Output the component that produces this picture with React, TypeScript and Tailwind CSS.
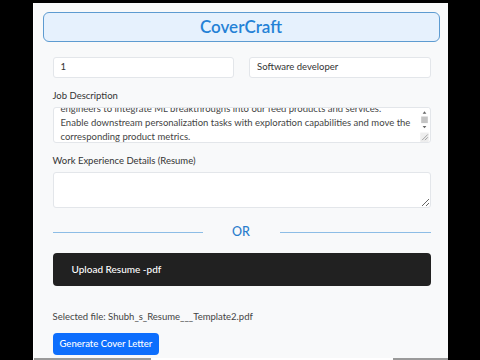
import React from "react";

const font = { fontFamily: "Lato, 'Noto Sans', sans-serif" };

export default function App() {
  return (
    <div className="w-[480px] h-[360px] bg-black flex justify-center pt-[3px] overflow-hidden" style={font}>
      <div className="w-[415px] h-[357px] bg-[#f8f9fa] flex flex-col border-l border-white">
        <div className="mt-[9px] ml-[9px] w-[397px] h-[30px] rounded-[6px] border border-[#5d9bd1] bg-[#e6f1fd] flex items-center justify-center">
          <span className="text-[17px] font-semibold text-[#2481d6]">CoverCraft</span>
        </div>

        <div className="flex flex-col ml-[19px] w-[378px] text-[9.5px] text-[#333]">
          <div className="grid grid-cols-2 gap-[15px] mt-[15px]">
            <div className="h-[21px] bg-white border border-[#e3e6ea] rounded-[3px] flex items-center px-[7px] text-[9.5px]">1</div>
            <div className="h-[21px] bg-white border border-[#e3e6ea] rounded-[3px] flex items-center px-[7px] text-[9.5px]">Software developer</div>
          </div>

          <div className="mt-[11px] leading-[14px] text-[9.5px]">Job Description</div>
          <div className="relative mt-[4px] h-[36px] bg-white border border-[#e3e6ea] rounded-[3px] overflow-hidden">
            <div className="pl-[7px] pr-[16px] leading-[14px] text-[9.5px] text-[#444] -mt-[6px] whitespace-nowrap">
              <div>engineers to integrate ML breakthroughs into our feed products and services.</div>
              <div>Enable downstream personalization tasks with exploration capabilities and move the</div>
              <div>corresponding product metrics.</div>
            </div>
            <div className="absolute right-[1px] top-0 bottom-0 w-[9px] flex flex-col items-center bg-white">
              <svg width="9" height="36" viewBox="0 0 9 36">
                <polygon points="2.5,6 6.5,6 4.5,3.5" fill="#666" />
                <rect x="1" y="9" width="7" height="7" fill="#c4c4c4" />
                <polygon points="2.5,19 6.5,19 4.5,21.5" fill="#666" />
                <rect x="0" y="26" width="9" height="10" fill="#eee" />
                <line x1="2" y1="34" x2="8" y2="28" stroke="#888" strokeWidth="0.8" />
                <line x1="5" y1="34" x2="8" y2="31" stroke="#888" strokeWidth="0.8" />
              </svg>
            </div>
          </div>

          <div className="mt-[11px] leading-[14px] text-[9.5px]">Work Experience Details (Resume)</div>
          <textarea className="mt-[4px] h-[36px] bg-white border border-[#e3e6ea] rounded-[3px] outline-none" />

          <div className="mt-[17px] flex items-center h-[14px]">
            <div className="w-[150px] h-px bg-[#8dbde6]" />
            <div className="flex-1 text-center text-[12.5px] text-[#2a7dcc] font-medium">OR</div>
            <div className="w-[151px] h-px bg-[#8dbde6]" />
          </div>

          <div className="mt-[14px] h-[33px] bg-[#212121] rounded-[4px] flex items-center pl-[19px] text-white text-[10px] font-medium">
            Upload Resume -pdf
          </div>

          <div className="mt-[24px] leading-[14px] text-[9.5px] text-[#444]">Selected file: Shubh_s_Resume___Template2.pdf</div>

          <div className="mt-[9px]">
            <div className="inline-flex h-[22px] px-[7px] items-center bg-[#0d6efd] rounded-[4px] text-white text-[9.5px] font-medium">
              Generate Cover Letter
            </div>
          </div>
        </div>
        <div className="mt-auto flex h-[2px]">
          <div className="w-[117px] bg-[#9a9a9a]" />
          <div className="flex-1 bg-white" />
          <div className="w-[55px] bg-[#9a9a9a]" />
        </div>
      </div>
    </div>
  );
}
